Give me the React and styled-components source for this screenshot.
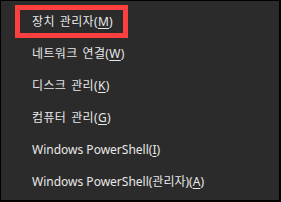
import React from "react";
import styled, { createGlobalStyle } from "styled-components";

const Global = createGlobalStyle`
  html, body { margin: 0; padding: 0; background: #2b2b2b; }
  body { font-family: "Noto Sans", "Noto Sans CJK KR", sans-serif; }
`;

const Frame = styled.div`
  box-sizing: border-box;
  width: 281px;
  height: 202px;
  background: #2b2b2b;
  border-top: 1px solid #000;
  border-left: 1px solid #000;
  border-right: 2px solid #000;
  border-bottom: 2px solid #000;
  padding-top: 4px;
  overflow: hidden;
`;

const Menu = styled.ul`
  list-style: none;
  margin: 0;
  padding: 0;
  display: flex;
  flex-direction: column;
`;

const Item = styled.li`
  height: 32px;
  display: flex;
  align-items: center;
  padding-left: 31px;
  font-size: 12px;
  color: #e8e8e8;
  white-space: nowrap;
  letter-spacing: ${(p) => (p.$ko ? "0.35px" : "0")};
  word-spacing: ${(p) => (p.$ko ? "1.5px" : "0")};
`;

const Label = styled.span`
  display: inline-block;
  line-height: 23px;
  height: 23px;
  ${(p) =>
    p.$marked &&
    `
    margin-left: -12px;
    padding: 0 10px 0 12px;
    outline: 5px solid #fc4040;
  `}
  u { text-decoration: underline; text-underline-offset: 2px; }
`;

const items = [
  { text: "장치 관리자", key: "M", marked: true, ko: true },
  { text: "네트워크 연결", key: "W", ko: true },
  { text: "디스크 관리", key: "K", ko: true },
  { text: "컴퓨터 관리", key: "G", ko: true },
  { text: "Windows PowerShell", key: "I" },
  { text: "Windows PowerShell(관리자)", key: "A" },
];

export default function App() {
  return (
    <>
      <Global />
      <Frame>
        <Menu>
          {items.map((it) => (
            <Item key={it.key} $ko={it.ko}>
              <Label $marked={it.marked}>
                {it.text}(<u>{it.key}</u>)
              </Label>
            </Item>
          ))}
        </Menu>
      </Frame>
    </>
  );
}
